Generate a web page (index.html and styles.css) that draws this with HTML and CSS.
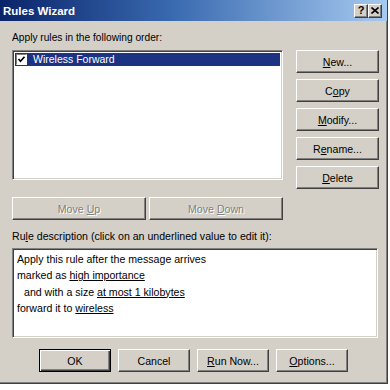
FILE: index.html
```html
<!DOCTYPE html>
<html>
<head>
<meta charset="utf-8">
<title>Rules Wizard</title>
<link rel="stylesheet" href="styles.css">
</head>
<body>
<div class="window">
  <div class="titlebar">
    <span class="title">Rules Wizard</span>
    <div class="tbtns">
      <span class="tbtn help">?</span>
      <span class="tbtn close"><svg width="8" height="7" viewBox="0 0 8 7"><path d="M0.5 0.5 L7.5 6.5 M7.5 0.5 L0.5 6.5" stroke="#000" stroke-width="1.6" fill="none"/></svg></span>
    </div>
  </div>
  <div class="content">
    <div class="label first">Apply rules in the following order:</div>
    <div class="top">
      <div class="list sunken">
        <div class="row sel">
          <span class="chk"><svg width="9" height="9" viewBox="0 0 9 9"><path d="M1.5 4 L3.5 6.2 L7.5 1.8" stroke="#000" stroke-width="1.7" fill="none"/></svg></span>
          <span class="rtext">Wireless Forward</span>
        </div>
      </div>
      <div class="side">
        <div class="btn"><span><u>N</u>ew...</span></div>
        <div class="btn"><span>C<u>o</u>py</span></div>
        <div class="btn"><span><u>M</u>odify...</span></div>
        <div class="btn"><span>R<u>e</u>name...</span></div>
        <div class="btn"><span><u>D</u>elete</span></div>
      </div>
    </div>
    <div class="moves">
      <div class="btn disabled"><span>Move <u>U</u>p</span></div>
      <div class="btn disabled"><span>Move <u>D</u>own</span></div>
    </div>
    <div class="label second">Ru<u>l</u>e description (click on an underlined value to edit it):</div>
    <div class="desc sunken">
      <div class="line">Apply this rule after the message arrives</div>
      <div class="line">marked as <u>high importance</u></div>
      <div class="line ind">and with a size <u>at most 1 kilobytes</u></div>
      <div class="line">forward it to <u>wireless</u></div>
    </div>
    <div class="bottom">
      <div class="btn default"><span>OK</span></div>
      <div class="btn"><span>Cancel</span></div>
      <div class="btn"><span><u>R</u>un Now...</span></div>
      <div class="btn"><span><u>O</u>ptions...</span></div>
    </div>
  </div>
</div>
</body>
</html>
```
FILE: styles.css
```css
* { box-sizing: border-box; }
html, body { margin: 0; padding: 0; background: #fff; }
body {
  font-family: "Liberation Sans", Arial, sans-serif;
  font-size: 10.6px;
  color: #000;
}
.window {
  width: 388px;
  height: 384px;
  background: #d4d0c8;
  border-right: 1px solid #404040;
  border-bottom: 1px solid #404040;
  box-shadow: inset -1px -1px #808080;
  display: flex;
  flex-direction: column;
}
.titlebar {
  height: 21px;
  flex: none;
  background: linear-gradient(to right, #0a246a 0%, #3a6ab0 45%, #a6caf0 100%);
  display: flex;
  align-items: center;
  justify-content: space-between;
  padding: 0 5px 0 3px;
}
.title {
  color: #fff;
  font-weight: bold;
  font-size: 11.5px;
  line-height: 14px;
}
.tbtns { display: flex; }
.tbtn {
  width: 14px;
  height: 14px;
  background: #d4d0c8;
  border: 1px solid;
  border-color: #fff #404040 #404040 #fff;
  box-shadow: inset -1px -1px #808080;
  display: flex;
  align-items: center;
  justify-content: center;
  font-weight: bold;
  font-size: 11px;
  line-height: 1;
}
.content {
  flex: 1;
  padding: 10px 8px 11px 12px;
  display: flex;
  flex-direction: column;
}
.label { line-height: 14px; height: 14px; white-space: nowrap; }
.label.first { margin-bottom: 5px; font-size: 10.2px; }
.label.second { margin-top: 9px; margin-bottom: 5px; }
.sunken {
  background: #fff;
  border: 1px solid;
  border-color: #808080 #fff #fff #808080;
  box-shadow: inset 1px 1px #404040, inset -1px -1px #d4d0c8;
}
.top {
  height: 139px;
  display: flex;
  justify-content: space-between;
  align-items: flex-start;
}
.list {
  width: 271px;
  height: 130px;
  padding: 2px 2px;
}
.row {
  height: 13px;
  display: flex;
  align-items: center;
  padding-left: 1px;
}
.row.sel { background: #1c3283; color: #fff; }
.chk {
  width: 11px;
  height: 11px;
  background: #fff;
  border: 1px solid;
  border-color: #808080 #fff #fff #808080;
  display: flex;
  align-items: center;
  justify-content: center;
}
.rtext { margin-left: 6px; line-height: 13px; font-size: 10.5px; }
.side {
  width: 83px;
  display: flex;
  flex-direction: column;
  gap: 6px;
}
.btn {
  height: 23px;
  background: #d4d0c8;
  border: 1px solid;
  border-color: #fff #404040 #404040 #fff;
  box-shadow: inset -1px -1px #808080;
  display: flex;
  align-items: center;
  justify-content: center;
  white-space: nowrap;
}
.btn.disabled {
  color: #808080;
  text-shadow: 1px 1px #fff;
}
.moves {
  margin-top: 8px;
  display: flex;
  gap: 3px;
}
.moves .btn { width: 134px; }
.desc {
  height: 90px;
  margin-right: 1px;
  padding: 2px 4px;
}
.line { line-height: 16.4px; height: 16.4px; white-space: nowrap; }
.line.ind { padding-left: 7px; }
.bottom {
  margin-top: 11px;
  display: flex;
  justify-content: center;
  gap: 7px;
  padding-right: 4px;
}
.bottom .btn { width: 72px; }
.btn.default {
  border: 1px solid #000;
  box-shadow: inset 1px 1px #fff, inset -1px -1px #404040, inset -2px -2px #808080;
}
u { text-decoration: underline; text-underline-offset: 1px; }
```
